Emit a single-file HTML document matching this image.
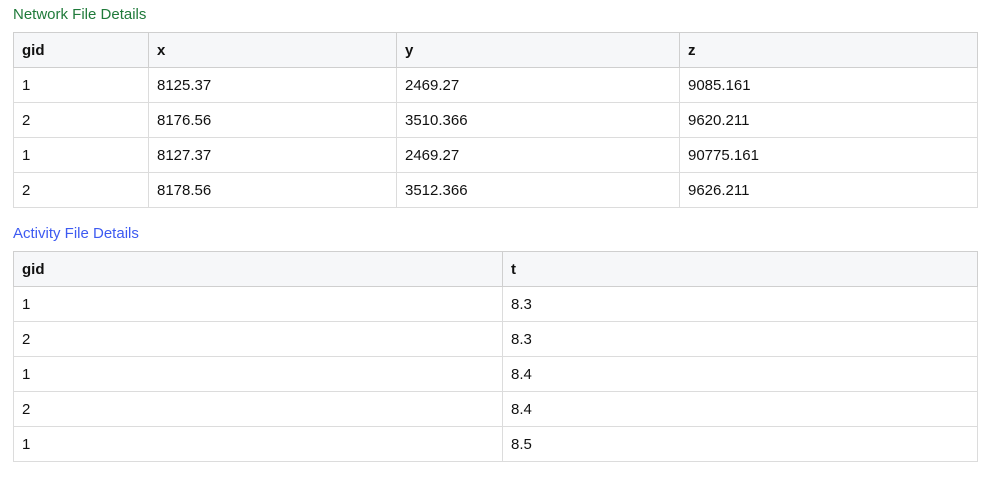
<!DOCTYPE html>
<html><head><style>
body{margin:0;background:#fff;font-family:"Liberation Sans",Arial,sans-serif;font-size:15px;color:#111;}
.t{position:absolute;left:13px;font-size:15px;}
table{position:absolute;left:13px;width:965px;border-collapse:collapse;}
td,th{border:1px solid #dcdcdc;height:35px;padding:0 0 0 8px;text-align:left;box-sizing:border-box;}
th{background:#f6f7f9;font-weight:bold;border-color:#cfcfcf;height:35px;}
</style></head><body>
<div class="t" style="top:6px;color:#1f7a3a">Network File Details</div>
<table style="top:32px">
<colgroup><col style="width:135px"><col style="width:248px"><col style="width:283px"><col></colgroup>
<tr><th>gid</th><th>x</th><th>y</th><th>z</th></tr>
<tr><td>1</td><td>8125.37</td><td>2469.27</td><td>9085.161</td></tr>
<tr><td>2</td><td>8176.56</td><td>3510.366</td><td>9620.211</td></tr>
<tr><td>1</td><td>8127.37</td><td>2469.27</td><td>90775.161</td></tr>
<tr><td>2</td><td>8178.56</td><td>3512.366</td><td>9626.211</td></tr>
</table>
<div class="t" style="top:225px;color:#3d5af1">Activity File Details</div>
<table style="top:251px">
<colgroup><col style="width:489px"><col></colgroup>
<tr><th>gid</th><th>t</th></tr>
<tr><td>1</td><td>8.3</td></tr>
<tr><td>2</td><td>8.3</td></tr>
<tr><td>1</td><td>8.4</td></tr>
<tr><td>2</td><td>8.4</td></tr>
<tr><td>1</td><td>8.5</td></tr>
</table>
</body></html>
